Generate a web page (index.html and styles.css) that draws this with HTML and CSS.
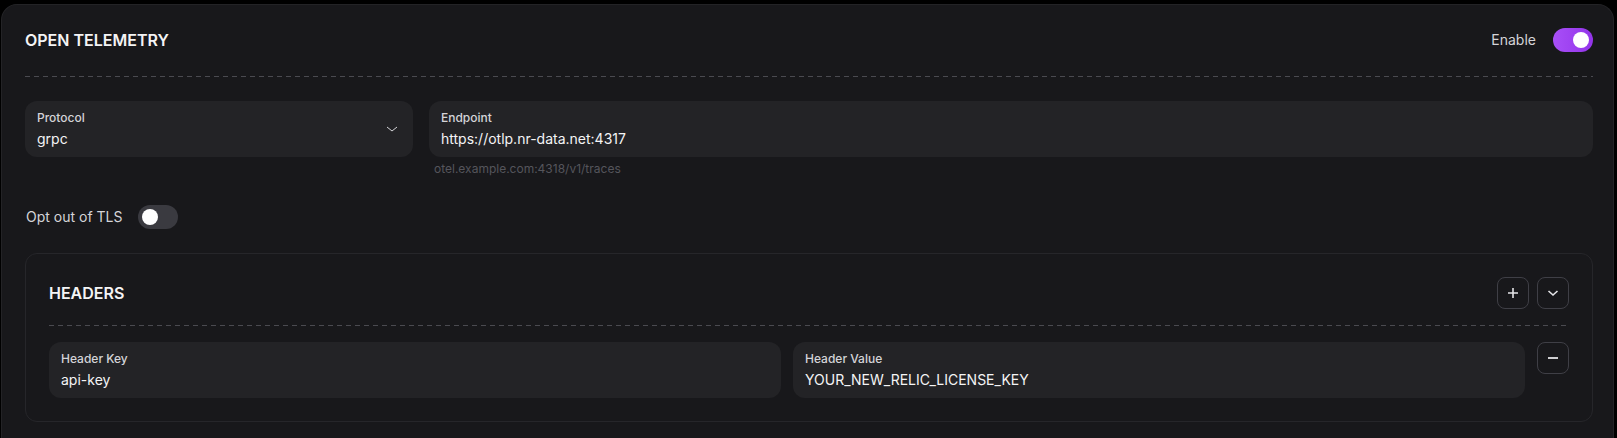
FILE: index.html
```html
<!DOCTYPE html>
<html lang="en">
<head>
<meta charset="utf-8">
<title>Open Telemetry</title>
<link rel="stylesheet" href="styles.css">
</head>
<body>
<section class="card">
  <div class="card-head">
    <h2 class="title">OPEN TELEMETRY</h2>
    <div class="enable">
      <span class="enable-label">Enable</span>
      <span class="switch switch-on"><span class="knob"></span></span>
    </div>
  </div>
  <div class="dash"></div>

  <div class="fields">
    <div class="field field-select">
      <div class="field-text">
        <div class="field-label">Protocol</div>
        <div class="field-value">grpc</div>
      </div>
      <svg class="select-chevron" width="12" height="8" viewBox="0 0 12 8"><path d="M1 2 L6 6 L11 2" fill="none" stroke="#d4d4d8" stroke-width="1"/></svg>
    </div>
    <div class="field-group">
      <div class="field">
        <div class="field-text">
          <div class="field-label">Endpoint</div>
          <div class="field-value">https://otlp.nr-data.net:4317</div>
        </div>
      </div>
      <div class="helper">otel.example.com:4318/v1/traces</div>
    </div>
  </div>

  <div class="tls-row">
    <span class="tls-label">Opt out of TLS</span>
    <span class="switch switch-off"><span class="knob"></span></span>
  </div>

  <div class="sub-card">
    <div class="sub-head">
      <h3 class="title">HEADERS</h3>
      <div class="actions">
        <button class="icon-btn" type="button" aria-label="Add">
          <svg width="14" height="14" viewBox="0 0 14 14"><path d="M7 2 V12 M2 7 H12" stroke="#e4e4e7" stroke-width="1.6" fill="none"/></svg>
        </button>
        <button class="icon-btn" type="button" aria-label="Collapse">
          <svg width="12" height="8" viewBox="0 0 12 8"><path d="M1.5 2 L6 6 L10.5 2" fill="none" stroke="#e4e4e7" stroke-width="1.6"/></svg>
        </button>
      </div>
    </div>
    <div class="dash dash-sub"></div>
    <div class="header-row">
      <div class="field">
        <div class="field-text">
          <div class="field-label">Header Key</div>
          <div class="field-value">api-key</div>
        </div>
      </div>
      <div class="field">
        <div class="field-text">
          <div class="field-label">Header Value</div>
          <div class="field-value">YOUR_NEW_RELIC_LICENSE_KEY</div>
        </div>
      </div>
      <button class="icon-btn" type="button" aria-label="Remove">
        <svg width="14" height="14" viewBox="0 0 14 14"><path d="M2 7 H12" stroke="#e4e4e7" stroke-width="1.8" fill="none"/></svg>
      </button>
    </div>
  </div>
</section>
</body>
</html>
```

FILE: styles.css
```css
* { box-sizing: border-box; }

html, body {
  margin: 0;
  padding: 0;
  background: #000;
  font-family: Inter, "Noto Sans", "Liberation Sans", sans-serif;
  color: #f4f4f5;
}

body {
  padding: 4px 3px 0 1px;
  height: 438px;
  overflow: hidden;
}

.card {
  background: #18181b;
  border: 1px solid #232326;
  border-bottom: none;
  border-radius: 16px 16px 0 0;
  padding: 23px 20px 0 23px;
  height: 434px;
  overflow: hidden;
}

.card-head {
  display: flex;
  align-items: center;
  justify-content: space-between;
  height: 24px;
}

.title {
  margin: 0;
  font-size: 16px;
  font-weight: 600;
  line-height: 20px;
  color: #f4f4f5;
  letter-spacing: 0;
}

.enable {
  display: flex;
  align-items: center;
  gap: 17px;
}

.enable-label {
  font-size: 14px;
  line-height: 20px;
  color: #d4d4d8;
}

.switch {
  display: flex;
  align-items: center;
  width: 40px;
  height: 24px;
  border-radius: 12px;
  padding: 0 4px;
}

.switch-on {
  background: linear-gradient(90deg, #a84ff7, #9334ea);
  justify-content: flex-end;
}

.switch-off {
  background: #3a3a40;
  justify-content: flex-start;
}

.knob {
  width: 16px;
  height: 16px;
  border-radius: 50%;
  background: #fff;
}

.dash {
  height: 1px;
  margin: 24px 0;
  background: repeating-linear-gradient(90deg, #4a4a50 0 5px, transparent 5px 9px);
}

.fields {
  display: grid;
  grid-template-columns: 388px 1fr;
  gap: 16px;
}

.field {
  display: flex;
  align-items: center;
  height: 56px;
  padding: 8px 12px;
  background: #232326;
  border-radius: 12px;
}

.field-text {
  flex: 1;
  min-width: 0;
}

.field-label {
  font-size: 12px;
  line-height: 16px;
  color: #d4d4d8;
  font-weight: 500;
}

.field-value {
  margin-top: 3px;
  font-size: 14px;
  line-height: 20px;
  color: #f4f4f5;
}

.select-chevron {
  margin-right: 3px;
}

.helper {
  margin-top: 4px;
  padding-left: 5px;
  font-size: 12px;
  line-height: 16px;
  color: #55555b;
}

.tls-row {
  display: flex;
  align-items: center;
  gap: 16px;
  margin-top: 28px;
  height: 24px;
}

.tls-label {
  font-size: 14px;
  line-height: 20px;
  color: #d4d4d8;
  padding-left: 1px;
}

.sub-card {
  margin-top: 24px;
  border: 1px solid #26262a;
  border-radius: 12px;
  padding: 23px;
}

.sub-head {
  display: flex;
  align-items: center;
  justify-content: space-between;
  height: 32px;
}

.actions {
  display: flex;
  gap: 8px;
}

.icon-btn {
  display: flex;
  align-items: center;
  justify-content: center;
  width: 32px;
  height: 32px;
  padding: 0;
  background: transparent;
  border: 1px solid #3f3f46;
  border-radius: 8px;
  cursor: pointer;
}

.dash-sub {
  margin: 16px 0;
}

.header-row {
  display: grid;
  grid-template-columns: 1fr 1fr 32px;
  gap: 12px;
  align-items: start;
}
```
